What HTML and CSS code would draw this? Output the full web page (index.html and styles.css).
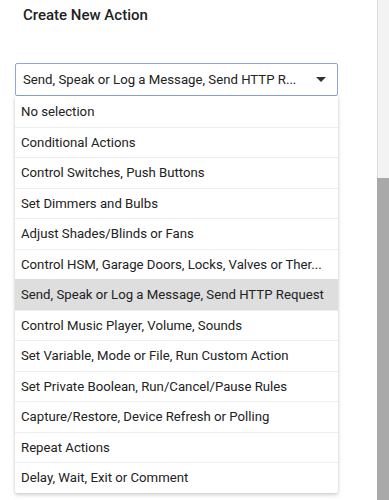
FILE: index.html
```html
<!DOCTYPE html>
<html lang="en">
<head>
    <meta charset="UTF-8">
    <title>Create New Action</title>
    <link rel="stylesheet" href="styles.css">
</head>
<body>
    <div class="page">
        <div class="content">
            <h2>Create New Action</h2>
            <div class="select">
                <span class="select-value">Send, Speak or Log a Message, Send HTTP R...</span>
                <span class="caret"></span>
            </div>
            <ul class="options">
                <li>No selection</li>
                <li>Conditional Actions</li>
                <li>Control Switches, Push Buttons</li>
                <li>Set Dimmers and Bulbs</li>
                <li>Adjust Shades/Blinds or Fans</li>
                <li>Control HSM, Garage Doors, Locks, Valves or Ther...</li>
                <li class="active">Send, Speak or Log a Message, Send HTTP Request</li>
                <li>Control Music Player, Volume, Sounds</li>
                <li>Set Variable, Mode or File, Run Custom Action</li>
                <li>Set Private Boolean, Run/Cancel/Pause Rules</li>
                <li>Capture/Restore, Device Refresh or Polling</li>
                <li>Repeat Actions</li>
                <li>Delay, Wait, Exit or Comment</li>
            </ul>
        </div>
        <div class="scrollbar">
            <div class="track"></div>
            <div class="thumb"></div>
        </div>
    </div>
</body>
</html>
```

FILE: styles.css
```css
* {
    box-sizing: border-box;
    margin: 0;
    padding: 0;
}
body {
    background: #ffffff;
    color: #212121;
    font-family: Roboto, 'Helvetica Neue', Arial, sans-serif;
    height: 500px;
    overflow: hidden;
}
.page {
    display: flex;
    height: 500px;
}
.content {
    flex: 1;
    min-width: 0;
    padding: 6px 39px 0 15px;
}
h2 {
    color: #1f1f1f;
    font-size: 15px;
    font-weight: 500;
    line-height: 18px;
    margin: 0 0 39px 8px;
}
.select {
    align-items: center;
    border: 1px solid #8ea6da;
    border-radius: 2px;
    display: flex;
    height: 33px;
    padding: 0 11px 0 7px;
}
.select-value {
    color: #222;
    flex: 1;
    font-size: 13.2px;
    overflow: hidden;
    white-space: nowrap;
}
.caret {
    border-left: 5px solid transparent;
    border-right: 5px solid transparent;
    border-top: 5px solid #333;
    flex-shrink: 0;
    height: 0;
    width: 0;
}
.options {
    background: #fff;
    border-radius: 0 0 2px 2px;
    box-shadow: 0 2px 4px rgba(0, 0, 0, 0.18), 0 0 2px rgba(0, 0, 0, 0.1);
    list-style: none;
}
.options li {
    border-top: 1px solid #eeeeee;
    color: #222;
    font-size: 13.2px;
    height: 30.5px;
    line-height: 30px;
    overflow: hidden;
    padding: 0 6px;
    white-space: nowrap;
}
.options li:first-child {
    border-top-color: transparent;
}
.options li.active {
    background: #dedede;
    border-top-color: #dedede;
}
.scrollbar {
    display: flex;
    flex-direction: column;
    flex-shrink: 0;
    width: 12px;
}
.track {
    background: #f3f3f3;
    border-left: 1px solid #dcdcdc;
    height: 178px;
}
.thumb {
    background: #a9a9a9;
    flex: 1;
}
```
